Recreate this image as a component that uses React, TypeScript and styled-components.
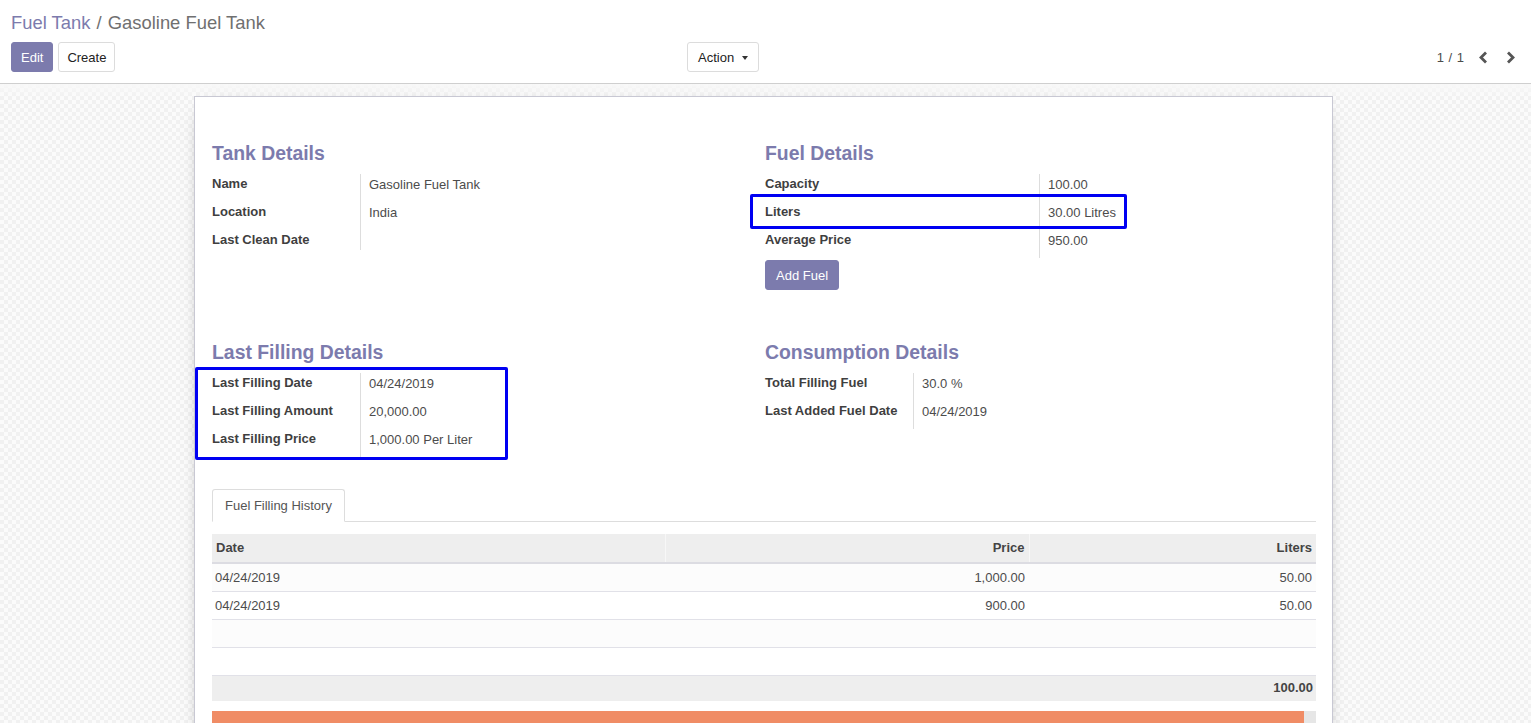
import React from "react";
import styled, { createGlobalStyle } from "styled-components";

const Global = createGlobalStyle`
  html, body { margin: 0; padding: 0; }
  body {
    font-family: "Liberation Sans", Arial, sans-serif;
    font-size: 13px;
    color: #4c4c4c;
    background: #fff;
    overflow: hidden;
  }
  * { box-sizing: border-box; }
`;

const Page = styled.div`
  width: 1531px;
  height: 723px;
  display: flex;
  flex-direction: column;
  overflow: hidden;
`;

const ControlPanel = styled.div`
  height: 84px;
  flex: none;
  border-bottom: 1px solid #cfcfcf;
  padding: 10px 7px 0 11px;
  background: #fff;
`;

const Breadcrumb = styled.div`
  font-size: 18.4px;
  line-height: 26px;
  color: #707070;
  white-space: nowrap;
`;

const Crumb = styled.a`
  color: #7c7bad;
  text-decoration: none;
`;

const Separator = styled.span`
  margin: 0 1px;
`;

const ButtonBar = styled.div`
  margin-top: 6px;
  display: grid;
  grid-template-columns: 676px 1fr auto;
  align-items: center;
`;

const ButtonGroup = styled.div`
  display: flex;
  gap: 5px;
  align-items: center;
`;

const Button = styled.button<{ $primary?: boolean }>`
  height: 30px;
  padding: 0 ${(p) => (p.$primary ? "9px" : "8px")};
  font-family: inherit;
  font-size: 13px;
  border-radius: 3px;
  border: 1px solid ${(p) => (p.$primary ? "#7c7bad" : "#dcdcdc")};
  background: ${(p) => (p.$primary ? "#7c7bad" : "#fff")};
  color: ${(p) => (p.$primary ? "#fff" : "#222")};
  display: inline-flex;
  align-items: center;
  gap: 8px;
  cursor: pointer;
`;

const DropButton = styled(Button)`
  padding: 0 10px 0 10px;
`;

const Caret = styled.span`
  width: 0;
  height: 0;
  border-left: 3.5px solid transparent;
  border-right: 3.5px solid transparent;
  border-top: 4px solid #333;
  margin-top: 1px;
`;

const Pager = styled.div`
  display: flex;
  align-items: center;
  color: #4c4c4c;
  font-size: 13px;
`;

const PagerValue = styled.span`
  margin-right: 6px;
  word-spacing: 1px;
`;

const PagerArrow = styled.span`
  width: 27px;
  display: inline-flex;
  justify-content: center;
  align-items: center;
  height: 30px;
`;

const Canvas = styled.div`
  flex: 1;
  overflow: hidden;
  padding: 12px 4px 0 0;
  background:
    linear-gradient(#f8f8f8, rgba(248, 248, 248, 0) 14px),
    repeating-conic-gradient(#f1f1f1 0% 25%, #fbfbfb 0% 50%) 0 0 / 8px 8px;
`;

const Sheet = styled.div`
  width: 1139px;
  min-height: 700px;
  margin: 0 auto;
  background: #fff;
  border: 1px solid #c8c8d3;
  box-shadow: 0 5px 20px -15px #000;
  padding: 44px 16px 0 17px;
`;

const GroupRow = styled.div<{ $gap?: number }>`
  display: grid;
  grid-template-columns: 1fr 1fr;
  margin-top: ${(p) => p.$gap ?? 0}px;
  align-items: start;
`;

const Group = styled.div<{ $shift?: number }>`
  padding-left: ${(p) => p.$shift ?? 0}px;
`;

const GroupTitle = styled.div`
  font-size: 19.4px;
  line-height: 24px;
  font-weight: bold;
  color: #7c7bad;
  margin-bottom: 9px;
`;

const Fields = styled.div<{ $label: number }>`
  position: relative;
  display: grid;
  grid-template-columns: ${(p) => p.$label}px 1fr;
`;

const Label = styled.div`
  border-right: 1px solid #dddddd;
  font-weight: bold;
  color: #3f3f3f;
  line-height: 20px;
  white-space: nowrap;
`;

const Value = styled.div<{ $empty?: boolean }>`
  padding-left: 8px;
  padding-top: 1px;
  line-height: 20px;
  min-height: ${(p) => (p.$empty ? 20 : 28)}px;
  color: #4c4c4c;
`;

const Highlight = styled.div`
  position: absolute;
  border: 3px solid #0000f2;
  border-radius: 2px;
  pointer-events: none;
`;

const AddButton = styled(Button)`
  margin-top: 2px;
  padding: 0 10px;
`;

const Tabs = styled.div`
  margin-top: 32px;
  height: 33px;
  border-bottom: 1px solid #dddddd;
  display: flex;
`;

const Tab = styled.div`
  height: 33px;
  padding: 0 12px;
  border: 1px solid #dddddd;
  border-bottom-color: #fff;
  border-radius: 3px 3px 0 0;
  background: #fff;
  display: flex;
  align-items: center;
  color: #555;
`;

const Table = styled.table`
  margin-top: 12px;
  width: 100%;
  border-collapse: collapse;
  table-layout: fixed;
`;

const Th = styled.th<{ $right?: boolean; $sep?: boolean }>`
  height: 29px;
  padding: 0 4px 1px;
  background: #eeeeee;
  border-bottom: 2px solid #dcdce2;
  border-left: ${(p) => (p.$sep ? "1px solid #f7f7f7" : "none")};
  text-align: ${(p) => (p.$right ? "right" : "left")};
  font-weight: bold;
  color: #444;
`;

const Tr = styled.tr<{ $odd?: boolean }>`
  background: ${(p) => (p.$odd ? "#fcfcfc" : "#fff")};
`;

const Td = styled.td<{ $right?: boolean }>`
  height: 28px;
  border-bottom: 1px solid #e1e1e8;
  text-align: ${(p) => (p.$right ? "right" : "left")};
  padding: 0 4px 0 3px;
  color: #4c4c4c;
`;

const FootTd = styled.td`
  height: 26px;
  background: #eeeeee;
  text-align: right;
  padding: 0 3px 1px;
  font-weight: bold;
  color: #444;
`;

const BarTrack = styled.div`
  margin-top: 10px;
  height: 14px;
  background: #e6e6e6;
`;

const BarFill = styled.div`
  height: 100%;
  background: #f08c65;
`;

const Chevron = ({ dir }: { dir: "left" | "right" }) => (
  <svg width="11" height="13" viewBox="0 0 11 13">
    <path
      d={dir === "left" ? "M8 1.5 L3 6.5 L8 11.5" : "M3 1.5 L8 6.5 L3 11.5"}
      fill="none"
      stroke="#555"
      strokeWidth="2.8"
    />
  </svg>
);

type Field = { label: string; value?: string };

const tank: Field[] = [
  { label: "Name", value: "Gasoline Fuel Tank" },
  { label: "Location", value: "India" },
  { label: "Last Clean Date" },
];
const fuel: Field[] = [
  { label: "Capacity", value: "100.00" },
  { label: "Liters", value: "30.00 Litres" },
  { label: "Average Price", value: "950.00" },
];
const filling: Field[] = [
  { label: "Last Filling Date", value: "04/24/2019" },
  { label: "Last Filling Amount", value: "20,000.00" },
  { label: "Last Filling Price", value: "1,000.00 Per Liter" },
];
const consumption: Field[] = [
  { label: "Total Filling Fuel", value: "30.0 %" },
  { label: "Last Added Fuel Date", value: "04/24/2019" },
];

const history = [
  { date: "04/24/2019", price: "1,000.00", liters: "50.00" },
  { date: "04/24/2019", price: "900.00", liters: "50.00" },
];

const renderFields = (fields: Field[]) =>
  fields.map((f) => (
    <React.Fragment key={f.label}>
      <Label>{f.label}</Label>
      <Value $empty={!f.value}>{f.value}</Value>
    </React.Fragment>
  ));

export default function App() {
  const filled = 1092 / 1104;
  return (
    <Page>
      <Global />
      <ControlPanel>
        <Breadcrumb>
          <Crumb>Fuel Tank</Crumb> <Separator>/</Separator> Gasoline Fuel Tank
        </Breadcrumb>
        <ButtonBar>
          <ButtonGroup>
            <Button $primary>Edit</Button>
            <Button>Create</Button>
          </ButtonGroup>
          <ButtonGroup>
            <DropButton>
              Action <Caret />
            </DropButton>
          </ButtonGroup>
          <Pager>
            <PagerValue>1 / 1</PagerValue>
            <PagerArrow>
              <Chevron dir="left" />
            </PagerArrow>
            <PagerArrow>
              <Chevron dir="right" />
            </PagerArrow>
          </Pager>
        </ButtonBar>
      </ControlPanel>
      <Canvas>
        <Sheet>
          <GroupRow>
            <Group>
              <GroupTitle>Tank Details</GroupTitle>
              <Fields $label={149}>{renderFields(tank)}</Fields>
            </Group>
            <Group $shift={1}>
              <GroupTitle>Fuel Details</GroupTitle>
              <Fields $label={275}>
                {renderFields(fuel)}
                <Highlight style={{ top: 20, left: -15, width: 377, height: 35 }} />
              </Fields>
              <AddButton $primary>Add Fuel</AddButton>
            </Group>
          </GroupRow>
          <GroupRow $gap={50}>
            <Group>
              <GroupTitle>Last Filling Details</GroupTitle>
              <Fields $label={149}>
                {renderFields(filling)}
                <Highlight style={{ top: -6, left: -17, width: 313, height: 93 }} />
              </Fields>
            </Group>
            <Group $shift={1}>
              <GroupTitle>Consumption Details</GroupTitle>
              <Fields $label={149}>{renderFields(consumption)}</Fields>
            </Group>
          </GroupRow>
          <Tabs>
            <Tab>Fuel Filling History</Tab>
          </Tabs>
          <Table>
            <colgroup>
              <col style={{ width: 453 }} />
              <col style={{ width: 364 }} />
              <col style={{ width: 287 }} />
            </colgroup>
            <thead>
              <tr>
                <Th>Date</Th>
                <Th $right $sep>
                  Price
                </Th>
                <Th $right $sep>
                  Liters
                </Th>
              </tr>
            </thead>
            <tbody>
              {history.map((h, i) => (
                <Tr key={i} $odd={i % 2 === 0}>
                  <Td>{h.date}</Td>
                  <Td $right>{h.price}</Td>
                  <Td $right>{h.liters}</Td>
                </Tr>
              ))}
              <Tr $odd>
                <Td />
                <Td />
                <Td />
              </Tr>
              <Tr>
                <Td />
                <Td />
                <Td />
              </Tr>
            </tbody>
            <tfoot>
              <tr>
                <FootTd />
                <FootTd />
                <FootTd>100.00</FootTd>
              </tr>
            </tfoot>
          </Table>
          <BarTrack>
            <BarFill style={{ width: `${filled * 100}%` }} />
          </BarTrack>
        </Sheet>
      </Canvas>
    </Page>
  );
}
